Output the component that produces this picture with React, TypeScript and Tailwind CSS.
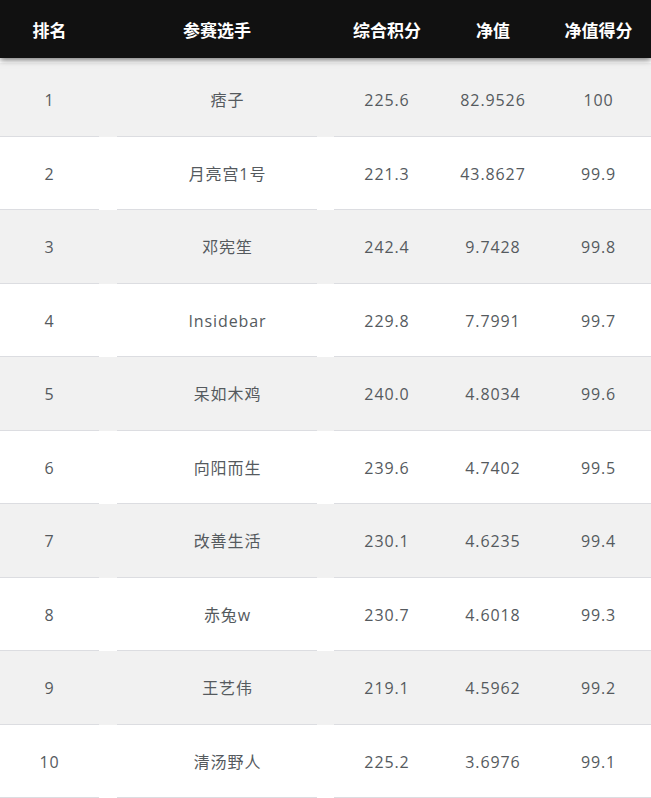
import React from "react";

const rows: [string, string, string, string, string][] = [
  ["1", "痞子", "225.6", "82.9526", "100"],
  ["2", "月亮宫1号", "221.3", "43.8627", "99.9"],
  ["3", "邓宪笙", "242.4", "9.7428", "99.8"],
  ["4", "Insidebar", "229.8", "7.7991", "99.7"],
  ["5", "呆如木鸡", "240.0", "4.8034", "99.6"],
  ["6", "向阳而生", "239.6", "4.7402", "99.5"],
  ["7", "改善生活", "230.1", "4.6235", "99.4"],
  ["8", "赤兔w", "230.7", "4.6018", "99.3"],
  ["9", "王艺伟", "219.1", "4.5962", "99.2"],
  ["10", "清汤野人", "225.2", "3.6976", "99.1"],
];

const font = { fontFamily: '"Open Sans", "Noto Sans CJK SC", sans-serif' };

export default function App() {
  return (
    <div className="w-[651px] h-[798px] bg-white overflow-hidden" style={font}>
      <div className="relative z-10 flex h-[58px] items-center pt-[2px] bg-[#111111] text-white font-bold text-[17px] shadow-[0_2px_6px_rgba(0,0,0,0.55)]" style={{ fontFamily: '"Noto Sans CJK SC", sans-serif' }}>
        <div className="w-[99px] text-center">排名</div>
        <div className="w-[18px]" />
        <div className="w-[200px] text-center">参赛选手</div>
        <div className="w-[17px]" />
        <div className="w-[106px] text-center">综合积分</div>
        <div className="w-[106px] text-center">净值</div>
        <div className="flex-1 text-center">净值得分</div>
      </div>
      <div className="h-[5px]" />
      {rows.map((r, i) => (
        <div
          key={i}
          className={`flex h-[73.5px] text-[16px] text-[#555a5e] tracking-[0.9px] ${i % 2 === 0 ? "bg-[#f1f1f1]" : "bg-white"}`}
        >
          <div className="w-[99px] flex items-center justify-center pt-[2px] border-b border-[#dcdde1]">{r[0]}</div>
          <div className="w-[18px]" />
          <div className="w-[200px] flex items-center justify-center pt-[2px] pl-[21px] border-b border-[#dcdde1]">{r[1]}</div>
          <div className="w-[17px]" />
          <div className="flex flex-1 pt-[2px] border-b border-[#dcdde1]">
            <div className="w-[106px] flex items-center justify-center">{r[2]}</div>
            <div className="w-[106px] flex items-center justify-center">{r[3]}</div>
            <div className="flex-1 flex items-center justify-center">{r[4]}</div>
          </div>
        </div>
      ))}
    </div>
  );
}
